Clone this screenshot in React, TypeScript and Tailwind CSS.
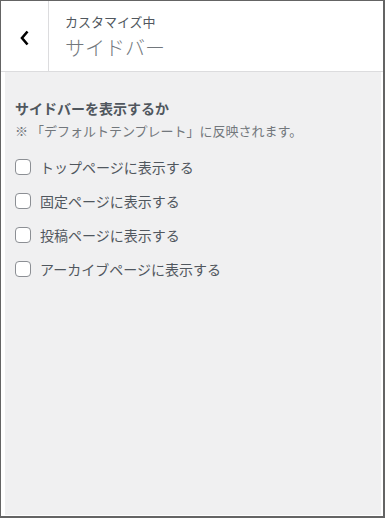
import React from 'react';

const options: string[] = [
  'トップページに表示する',
  '固定ページに表示する',
  '投稿ページに表示する',
  'アーカイブページに表示する',
];

const font = { fontFamily: '"Noto Sans CJK JP", "Noto Sans", sans-serif' };

const App: React.FC = () => {
  return (
    <div
      className="w-[385px] h-[518px] bg-[#646464] pt-px pl-px pr-[2px] pb-[2px]"
      style={font}
    >
      <div className="flex flex-col h-full bg-white pb-px">
        {/* Header */}
        <div className="flex h-[71px] border-b border-[#dcdcde] shrink-0">
          <button className="w-[48px] flex items-center justify-center border-r border-[#dcdcde]">
            <svg width="10" height="16" viewBox="0 0 10 16" className="mt-[3px]">
              <path d="M7.5 1.5 L2 8 L7.5 14.5" fill="none" stroke="#000" strokeWidth="2.6" />
            </svg>
          </button>
          <div className="flex flex-col pl-4 pt-[11px]">
            <span className="text-[13px] leading-[20px] text-[#50575e]">カスタマイズ中</span>
            <span className="text-[20px] leading-[28px] font-light text-[#72777c] mt-[2px]">サイドバー</span>
          </div>
        </div>

        {/* Body */}
        <div className="flex-1 ml-[4px] mr-[2px] bg-[#f0f0f1] px-[10px] pt-[26px]">
          <h3 className="text-[14px] leading-5 font-bold text-[#50575e]">サイドバーを表示するか</h3>
          <p className="text-[13px] leading-5 text-[#72777c] mt-[3px]">
            ※ 「デフォルトテンプレート」に反映されます。
          </p>
          <div className="flex flex-col gap-[14px] mt-[16px]">
            {options.map((label) => (
              <label key={label} className="flex items-center h-5 gap-[9px]">
                <span className="w-4 h-4 bg-white border border-[#8c8f94] rounded-[4px] shrink-0" />
                <span className="text-[14px] leading-5 text-[#50575e]">{label}</span>
              </label>
            ))}
          </div>
        </div>
      </div>
    </div>
  );
};

export default App;
